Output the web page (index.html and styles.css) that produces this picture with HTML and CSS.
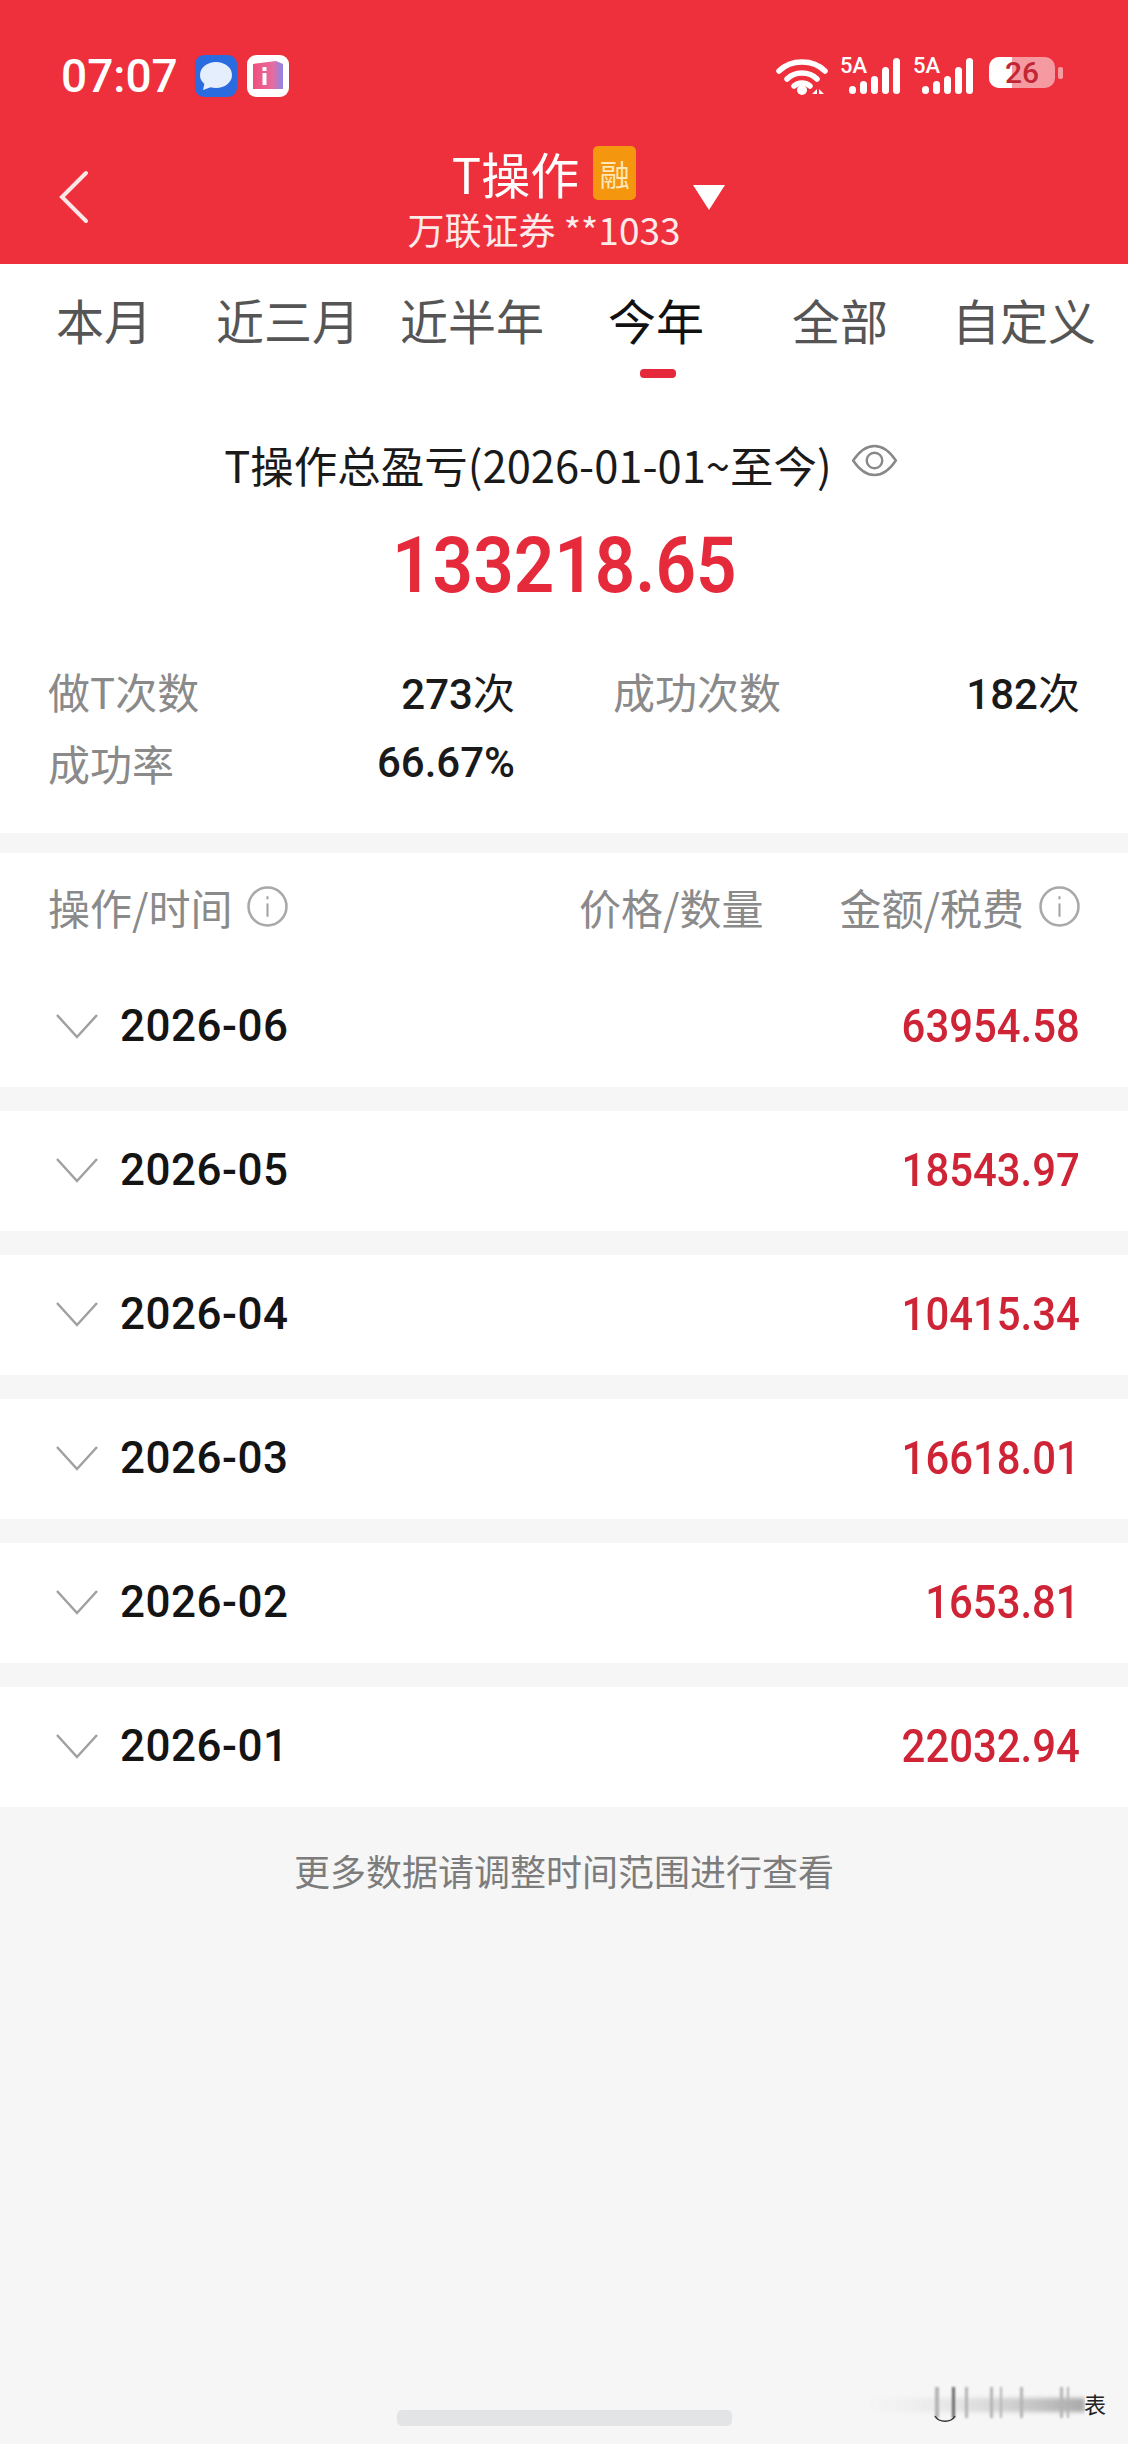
FILE: index.html
```html
<!DOCTYPE html>
<html lang="zh-CN">

<head>
    <meta charset="UTF-8">
    <meta name="viewport" content="width=device-width, initial-scale=1.0">
    <title>T操作</title>
    <link rel="stylesheet" href="styles.css">
</head>

<body>
    <header class="top-bar">
        <div class="status-bar">
            <div class="status-left">
                <span class="clock">07:07</span>
                <svg class="app-icon" viewBox="0 0 42 42">
                    <rect width="42" height="42" rx="9" fill="#2a6be0" />
                    <ellipse cx="21" cy="20" rx="16" ry="13" fill="#e4eefc" />
                    <path d="M10 26 L8 35 L19 31 Z" fill="#e4eefc" />
                </svg>
                <svg class="app-icon" viewBox="0 0 42 42">
                    <defs>
                        <linearGradient id="pinkBlue" x1="0" x2="1" y1="0" y2="0">
                            <stop offset="0" stop-color="#f0507c" />
                            <stop offset="0.65" stop-color="#e66ba0" />
                            <stop offset="1" stop-color="#8d86e8" />
                        </linearGradient>
                    </defs>
                    <rect width="42" height="42" rx="9" fill="#fff" />
                    <path d="M6 9 L29 6 L36 9 V34 L6 34 Z" fill="url(#pinkBlue)" />
                    <rect x="15.5" y="12" width="4" height="4" fill="#fff" />
                    <rect x="15.5" y="18" width="4" height="12" fill="#fff" />
                </svg>
            </div>
            <div class="status-right">
                <svg class="wifi" viewBox="0 0 52 40">
                    <path d="M3 15 C15 3 37 3 49 15" />
                    <path d="M11 23 C19 15 33 15 41 23" />
                    <path d="M18 30 C22 26 30 26 34 30" />
                    <circle cx="26" cy="34" r="5" class="fill" />
                    <path d="M36 38 L41 33 V38 Z M43 33 L48 38 H43 Z" class="fill" />
                </svg>
                <div class="signal">
                    <span class="signal-label">5A</span>
                    <svg viewBox="0 0 51 36" class="signal-bars">
                        <rect x="0" y="28" width="7" height="8" rx="3.5" />
                        <rect x="11" y="23" width="7" height="13" rx="3.5" />
                        <rect x="22" y="18" width="7" height="18" rx="3.5" />
                        <rect x="33" y="9" width="7" height="27" rx="3.5" />
                        <rect x="44" y="0" width="7" height="36" rx="3.5" />
                    </svg>
                </div>
                <div class="signal">
                    <span class="signal-label">5A</span>
                    <svg viewBox="0 0 51 36" class="signal-bars">
                        <rect x="0" y="28" width="7" height="8" rx="3.5" />
                        <rect x="11" y="23" width="7" height="13" rx="3.5" />
                        <rect x="22" y="18" width="7" height="18" rx="3.5" />
                        <rect x="33" y="9" width="7" height="27" rx="3.5" />
                        <rect x="44" y="0" width="7" height="36" rx="3.5" />
                    </svg>
                </div>
                <div class="battery">
                    <div class="battery-body">
                        <span class="battery-fill"></span>
                        <span class="battery-num">26</span>
                    </div>
                    <span class="battery-cap"></span>
                </div>
            </div>
        </div>

        <div class="nav-bar">
            <svg class="back-icon" viewBox="0 0 32 54">
                <path d="M28 3 L4 27 L28 51" />
            </svg>
            <div class="nav-title">
                <div class="title-line">
                    <span class="title-text">T操作</span>
                    <span class="rong-tag">融</span>
                </div>
                <div class="account-line">万联证券 **1033</div>
                <span class="account-arrow"></span>
            </div>
        </div>
    </header>

    <nav class="tabs">
        <div class="tab">本月</div>
        <div class="tab">近三月</div>
        <div class="tab">近半年</div>
        <div class="tab active">今年</div>
        <div class="tab">全部</div>
        <div class="tab">自定义</div>
    </nav>

    <section class="summary">
        <div class="summary-title">
            <span>T操作总盈亏(2026-01-01~至今)</span>
            <svg class="eye-icon" viewBox="0 0 48 34">
                <path d="M2 17 C10 5 17 2 24 2 C31 2 38 5 46 17 C38 29 31 32 24 32 C17 32 10 29 2 17 Z" />
                <circle cx="24" cy="17" r="8" />
            </svg>
        </div>
        <div class="summary-amount"><span>133218.65</span></div>
        <div class="stats">
            <div class="stat"><span class="stat-label">做T次数</span><span class="stat-value">273<span class="unit">次</span></span></div>
            <div class="stat"><span class="stat-label">成功次数</span><span class="stat-value">182<span class="unit">次</span></span></div>
            <div class="stat"><span class="stat-label">成功率</span><span class="stat-value">66.67%</span></div>
        </div>
    </section>

    <div class="table-head">
        <div class="head-col head-op">操作/时间
            <svg class="info-icon" viewBox="0 0 40 40">
                <circle cx="20" cy="20" r="18.5" />
                <rect x="19" y="10" width="2" height="3" class="dot" />
                <rect x="19" y="17" width="2" height="13" class="dot" />
            </svg>
        </div>
        <div class="head-col head-price">价格/数量</div>
        <div class="head-col head-amount">金额/税费
            <svg class="info-icon" viewBox="0 0 40 40">
                <circle cx="20" cy="20" r="18.5" />
                <rect x="19" y="10" width="2" height="3" class="dot" />
                <rect x="19" y="17" width="2" height="13" class="dot" />
            </svg>
        </div>
    </div>

    <div class="months">
        <div class="month">
            <svg class="chevron" viewBox="0 0 44 26"><path d="M2 2 L22 24 L42 2" /></svg>
            <span class="month-name">2026-06</span>
            <span class="month-value">63954.58</span>
        </div>
        <div class="month">
            <svg class="chevron" viewBox="0 0 44 26"><path d="M2 2 L22 24 L42 2" /></svg>
            <span class="month-name">2026-05</span>
            <span class="month-value">18543.97</span>
        </div>
        <div class="month">
            <svg class="chevron" viewBox="0 0 44 26"><path d="M2 2 L22 24 L42 2" /></svg>
            <span class="month-name">2026-04</span>
            <span class="month-value">10415.34</span>
        </div>
        <div class="month">
            <svg class="chevron" viewBox="0 0 44 26"><path d="M2 2 L22 24 L42 2" /></svg>
            <span class="month-name">2026-03</span>
            <span class="month-value">16618.01</span>
        </div>
        <div class="month">
            <svg class="chevron" viewBox="0 0 44 26"><path d="M2 2 L22 24 L42 2" /></svg>
            <span class="month-name">2026-02</span>
            <span class="month-value">1653.81</span>
        </div>
        <div class="month">
            <svg class="chevron" viewBox="0 0 44 26"><path d="M2 2 L22 24 L42 2" /></svg>
            <span class="month-name">2026-01</span>
            <span class="month-value">22032.94</span>
        </div>
    </div>

    <p class="more-hint">更多数据请调整时间范围进行查看</p>

    <div class="home-bar"></div>

    <!-- smeared watermark in the corner of the screenshot -->
    <div class="smudge">
        <svg class="smudge-marks" viewBox="0 0 225 50">
            <defs>
                <linearGradient id="smear" x1="0" x2="1" y1="0" y2="0">
                    <stop offset="0" stop-color="#e4e4e4" stop-opacity="0" />
                    <stop offset="1" stop-color="#a8a8a8" />
                </linearGradient>
            </defs>
            <rect class="smudge-band" x="5" y="20" width="220" height="14" fill="url(#smear)" />
            <rect class="smudge-bar" x="75" y="9" width="4" height="31" />
            <rect class="smudge-bar dark" x="92" y="9" width="3" height="31" />
            <rect class="smudge-bar" x="105" y="9" width="3" height="31" />
            <rect class="smudge-bar" x="130" y="9" width="3" height="31" />
            <rect class="smudge-bar" x="140" y="9" width="2" height="31" />
            <rect class="smudge-bar" x="160" y="9" width="3" height="31" />
            <rect class="smudge-bar" x="200" y="9" width="3" height="31" />
            <rect class="smudge-bar" x="207" y="9" width="2" height="31" />
            <path class="smudge-curve" d="M75 38 C79 45 91 45 95 38" />
        </svg>
        <span class="smudge-char">表</span>
    </div>
</body>

</html>
```

FILE: styles.css
```css
* {
    box-sizing: border-box;
}

html,
body {
    margin: 0;
    padding: 0;
}

body {
    position: relative;
    width: 1128px;
    height: 2444px;
    overflow: hidden;
    background-color: #f6f6f7;
    font-family: "Noto Sans CJK SC", "Liberation Sans", sans-serif;
    color: #111;
}

.top-bar {
    height: 264px;
    background-color: #ee2f3c;
    color: #fff;
    padding-top: 50px;
}

.status-bar {
    display: flex;
    justify-content: space-between;
    align-items: center;
    height: 52px;
    padding: 0 65px 0 61px;
}

.status-left,
.status-right {
    display: flex;
    align-items: center;
}

.clock {
    font-family: Roboto, sans-serif;
    font-size: 46px;
    font-weight: 500;
    margin-right: 17px;
}

.app-icon {
    width: 42px;
    height: 42px;
    margin-right: 10px;
}

.wifi {
    width: 52px;
    height: 40px;
    margin-right: 12px;
}

.wifi path {
    fill: none;
    stroke: #fff;
    stroke-width: 5.5;
    stroke-linecap: round;
}

.wifi .fill {
    fill: #fff;
    stroke: none;
}

.signal {
    position: relative;
    width: 60px;
    height: 36px;
    margin-right: 13px;
}

.signal-label {
    position: absolute;
    left: 0;
    top: -3px;
    font-family: Roboto, sans-serif;
    font-size: 22px;
    font-weight: 500;
    line-height: 22px;
}

.signal-bars {
    position: absolute;
    right: 0;
    bottom: 0;
    width: 51px;
    height: 36px;
    fill: #fff;
}

.battery {
    display: flex;
    align-items: center;
    margin-left: 3px;
    margin-bottom: 7px;
}

.battery-body {
    position: relative;
    width: 66px;
    height: 31px;
    border-radius: 10px;
    background-color: #f59aa0;
}

.battery-fill {
    position: absolute;
    left: 0;
    top: 0;
    bottom: 0;
    width: 23px;
    border-radius: 10px 0 0 10px;
    background-color: #fff;
}

.battery-num {
    position: relative;
    display: block;
    text-align: center;
    font-family: Roboto, sans-serif;
    font-size: 30px;
    font-weight: 500;
    line-height: 31px;
    color: #c22636;
}

.battery-cap {
    width: 5px;
    height: 12px;
    margin-left: 3px;
    border-radius: 2px;
    background-color: #f59aa0;
}

.nav-bar {
    position: relative;
    display: flex;
    justify-content: center;
    height: 162px;
}

.back-icon {
    position: absolute;
    left: 58px;
    top: 68px;
    width: 32px;
    height: 54px;
    fill: none;
    stroke: #fde6e8;
    stroke-width: 4;
    stroke-linecap: round;
}

.nav-title {
    position: relative;
    margin-left: -40px;
    padding-top: 44px;
    text-align: center;
}

.title-line {
    display: flex;
    justify-content: center;
    align-items: center;
    height: 54px;
}

.title-text {
    font-size: 49px;
    line-height: 54px;
}

.rong-tag {
    width: 43px;
    height: 54px;
    margin-left: 14px;
    border-radius: 5px;
    background-color: #f5960f;
    color: #fde7b8;
    font-size: 30px;
    line-height: 54px;
}

.account-line {
    margin-top: 7px;
    font-size: 37px;
    line-height: 44px;
    color: #fdeaea;
    white-space: nowrap;
}

.account-arrow {
    position: absolute;
    right: -44px;
    top: 83px;
    width: 0;
    height: 0;
    border-left: 16px solid transparent;
    border-right: 16px solid transparent;
    border-top: 25px solid #fff;
}

.tabs {
    position: relative;
    display: flex;
    height: 120px;
    padding: 0 12px;
    background-color: #fff;
}

.tab {
    flex: 1;
    padding-top: 24px;
    text-align: center;
    font-size: 48px;
    line-height: 62px;
    color: #555;
}

.tab.active {
    position: relative;
    color: #111;
}

.tab.active::after {
    content: "";
    position: absolute;
    left: 50%;
    top: 105px;
    width: 36px;
    height: 9px;
    margin-left: -16px;
    border-radius: 4px;
    background-color: #e5283a;
}

.summary {
    height: 449px;
    padding: 0 48px;
    background-color: #fff;
}

.summary-title {
    display: flex;
    justify-content: center;
    align-items: flex-start;
    padding-top: 52px;
    padding-right: 6px;
    font-size: 43.5px;
    line-height: 58px;
    color: #1a1a1a;
    white-space: nowrap;
}

.eye-icon {
    width: 47px;
    height: 33px;
    margin-left: 19px;
    margin-top: 8px;
    fill: none;
    stroke: #888;
    stroke-width: 2.5;
}

.summary-amount {
    margin-top: 27px;
    text-align: center;
    font-family: Roboto, sans-serif;
    font-size: 78px;
    font-weight: 600;
    line-height: 90px;
    color: #e52a3c;
}

.summary-amount span {
    display: inline-block;
    transform: scaleX(0.91);
}

.stats {
    display: grid;
    grid-template-columns: 467px 467px;
    column-gap: 98px;
    row-gap: 24px;
    margin-top: 55px;
}

.stat {
    display: flex;
    justify-content: space-between;
    align-items: center;
    height: 48px;
}

.stat-label {
    font-size: 42px;
    color: #8a8a8a;
}

.stat-value {
    font-family: Roboto, "Noto Sans CJK SC", sans-serif;
    font-size: 42px;
    font-weight: 500;
    color: #1a1a1a;
}

.unit {
    font-weight: 400;
}

.table-head {
    display: flex;
    align-items: center;
    height: 114px;
    margin-top: 20px;
    padding: 0 48px 7px;
    background-color: #fff;
    font-size: 42px;
    color: #8a8a8a;
}

.head-col {
    display: flex;
    align-items: center;
    white-space: nowrap;
}

.head-op {
    width: 536px;
}

.head-price {
    width: 263px;
}

.info-icon {
    width: 41px;
    height: 41px;
    margin-left: 15px;
    fill: none;
    stroke: #a9a9a9;
    stroke-width: 2.5;
}

.info-icon .dot {
    fill: #a3a3a3;
    stroke: none;
}

.month {
    display: flex;
    align-items: center;
    height: 120px;
    margin-bottom: 24px;
    padding: 0 48px 2px 55px;
    background-color: #fff;
}

.month:last-child {
    margin-bottom: 0;
}

.chevron {
    width: 44px;
    height: 26px;
    fill: none;
    stroke: #a0a0a0;
    stroke-width: 2.5;
}

.month-name {
    margin-left: 21px;
    font-family: Roboto, sans-serif;
    font-size: 44px;
    font-weight: 500;
    letter-spacing: 0.5px;
    color: #141414;
}

.month-value {
    display: inline-block;
    margin-left: auto;
    font-family: Roboto, sans-serif;
    font-size: 46px;
    font-weight: 500;
    color: #cf2436;
    transform: scaleX(0.91);
    transform-origin: right center;
}

.more-hint {
    margin: 37px 0 0;
    text-align: center;
    font-size: 36px;
    line-height: 52px;
    color: #7c7c7c;
}

.home-bar {
    position: absolute;
    left: 397px;
    bottom: 18px;
    width: 335px;
    height: 16px;
    border-radius: 5px;
    background-color: #e3e4e6;
}

.smudge {
    position: absolute;
    left: 860px;
    top: 2378px;
    display: flex;
    align-items: center;
    height: 50px;
}

.smudge-marks {
    width: 225px;
    height: 50px;
}

.smudge-band {
    filter: blur(2px);
}

.smudge-bar {
    fill: #b4b4b4;
    filter: blur(1px);
}

.smudge-bar.dark {
    fill: #6a6a6a;
}

.smudge-curve {
    fill: none;
    stroke: #333;
    stroke-width: 1.5;
}

.smudge-char {
    margin-left: -1px;
    font-size: 22px;
    line-height: 28px;
    color: #222;
}
```
